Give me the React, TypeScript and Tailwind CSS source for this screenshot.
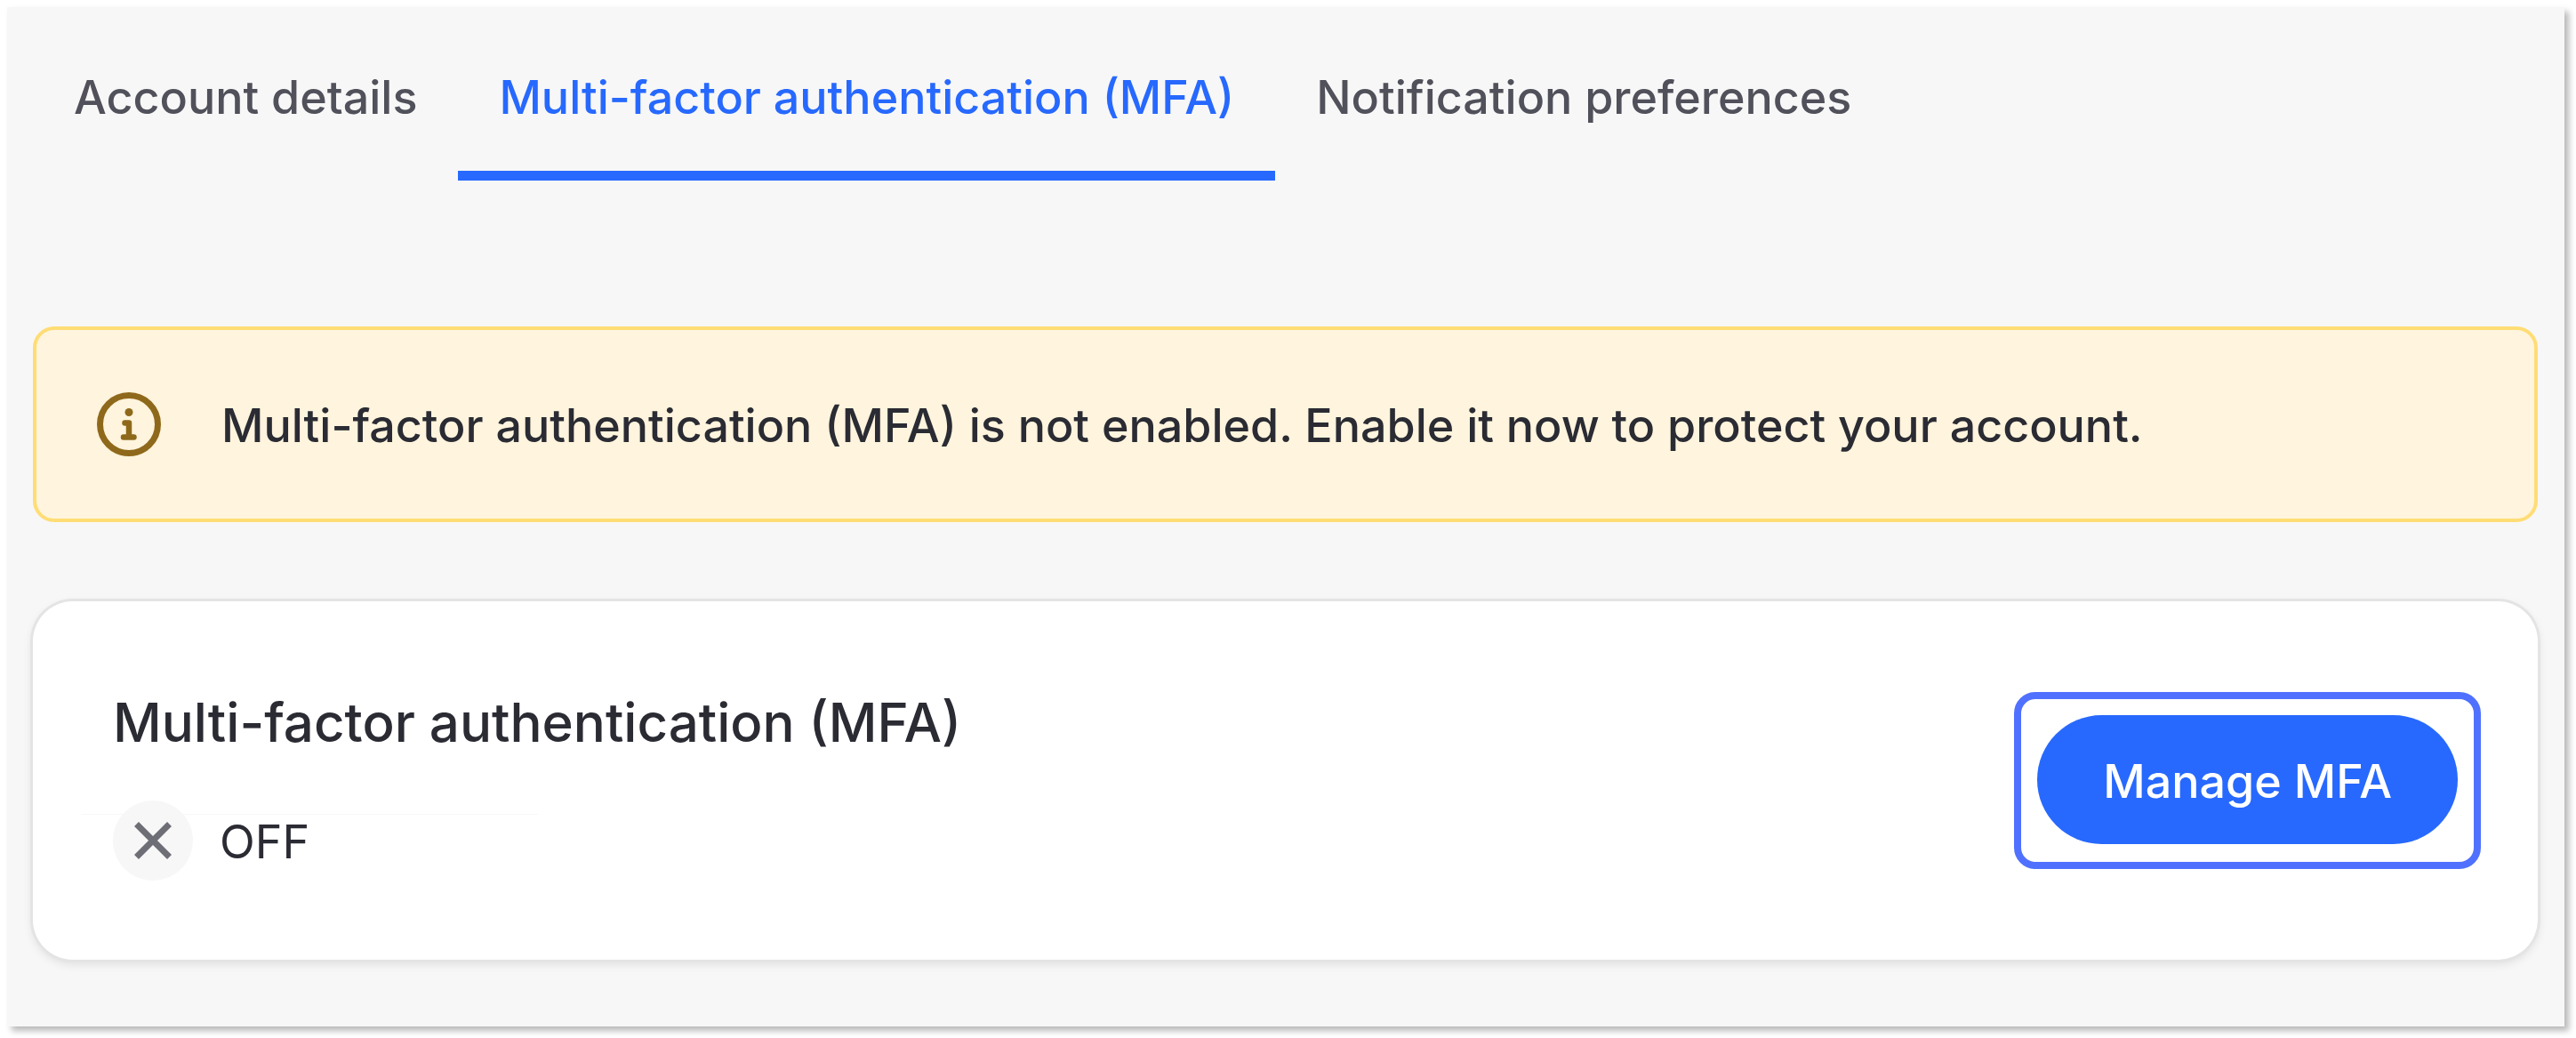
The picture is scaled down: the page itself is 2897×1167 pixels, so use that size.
const tabs = [
  { label: "Account details", active: false },
  { label: "Multi-factor authentication (MFA)", active: true },
  { label: "Notification preferences", active: false },
];

function InfoIcon() {
  return (
    <svg viewBox="0 0 72 72" className="size-[72px] shrink-0" fill="none" stroke="#8f691b" aria-hidden="true">
      <circle cx="36" cy="36" r="32.5" strokeWidth="7" />
      <circle cx="36" cy="22.5" r="4.5" fill="#8f691b" stroke="none" />
      <path d="M31.5 34.5H36V50.5M30 50.5H41.5" strokeWidth="6.5" strokeLinecap="round" strokeLinejoin="round" />
    </svg>
  );
}

export default function App() {
  return (
    <div className="min-h-screen bg-white pt-2 pr-[13px] pb-[13px] pl-2 font-['Inter',sans-serif] text-[52px] leading-[64px] text-[#2a2b33]">
      <main className="flex min-h-[1146px] flex-col bg-[#f7f7f7] pr-[30px] pb-[75px] pl-[29px] shadow-[5px_5px_7px_rgba(0,0,0,0.28)]">
        <nav className="flex" aria-label="Account settings">
          {tabs.map((t) => (
            <button
              key={t.label}
              type="button"
              aria-current={t.active ? "page" : undefined}
              className={
                t.active
                  ? "border-b-[11px] border-[#2769fe] px-[46px] pt-[70px] pb-[50px] font-medium text-[#2769fe]"
                  : "border-b-[11px] border-transparent px-[46px] pt-[70px] pb-[50px] font-medium text-[#50515a]"
              }
            >
              {t.label}
            </button>
          ))}
        </nav>

        <div
          role="status"
          className="mt-[164px] flex min-h-[220px] items-center gap-[68px] rounded-[24px] border-4 border-[#ffdd75] bg-[#fff4dd] px-[68px] font-medium"
        >
          <InfoIcon />
          <p className="pt-1">
            Multi-factor authentication (MFA) is not enabled. Enable it now to protect your account.
          </p>
        </div>

        <section className="mt-[89px] flex items-center justify-between rounded-[45px] bg-white pr-[64px] pl-[90px] shadow-[0_0_0_3px_#e4e4e5,0_4px_12px_rgba(0,0,0,0.12)]">
          <div className="pt-[98px] pb-[89px]">
            <h2 className="text-[60px] leading-[76px] font-medium">Multi-factor authentication (MFA)</h2>
            <div className="relative mt-[50px] flex items-center gap-[30px]">
              <span className="absolute top-[15px] -left-[35px] h-px w-[513px] bg-[#f7f7f7]" />
              <span className="flex size-[90px] items-center justify-center rounded-full bg-[#f7f7f7]">
                <svg viewBox="0 0 42 42" className="size-[42px]" stroke="#6d6e76" strokeWidth="7" aria-hidden="true">
                  <path d="M2.5 2.5L39.5 39.5M39.5 2.5L2.5 39.5" />
                </svg>
              </span>
              <span className="pt-1">OFF</span>
            </div>
          </div>
          <div className="rounded-[24px] border-8 border-[#5071ff] px-[18px] pt-[18px] pb-5">
            <button type="button" className="h-[145px] rounded-full bg-[#2769fe] px-[74px] pt-1 font-medium text-white">
              Manage MFA
            </button>
          </div>
        </section>
      </main>
    </div>
  );
}
